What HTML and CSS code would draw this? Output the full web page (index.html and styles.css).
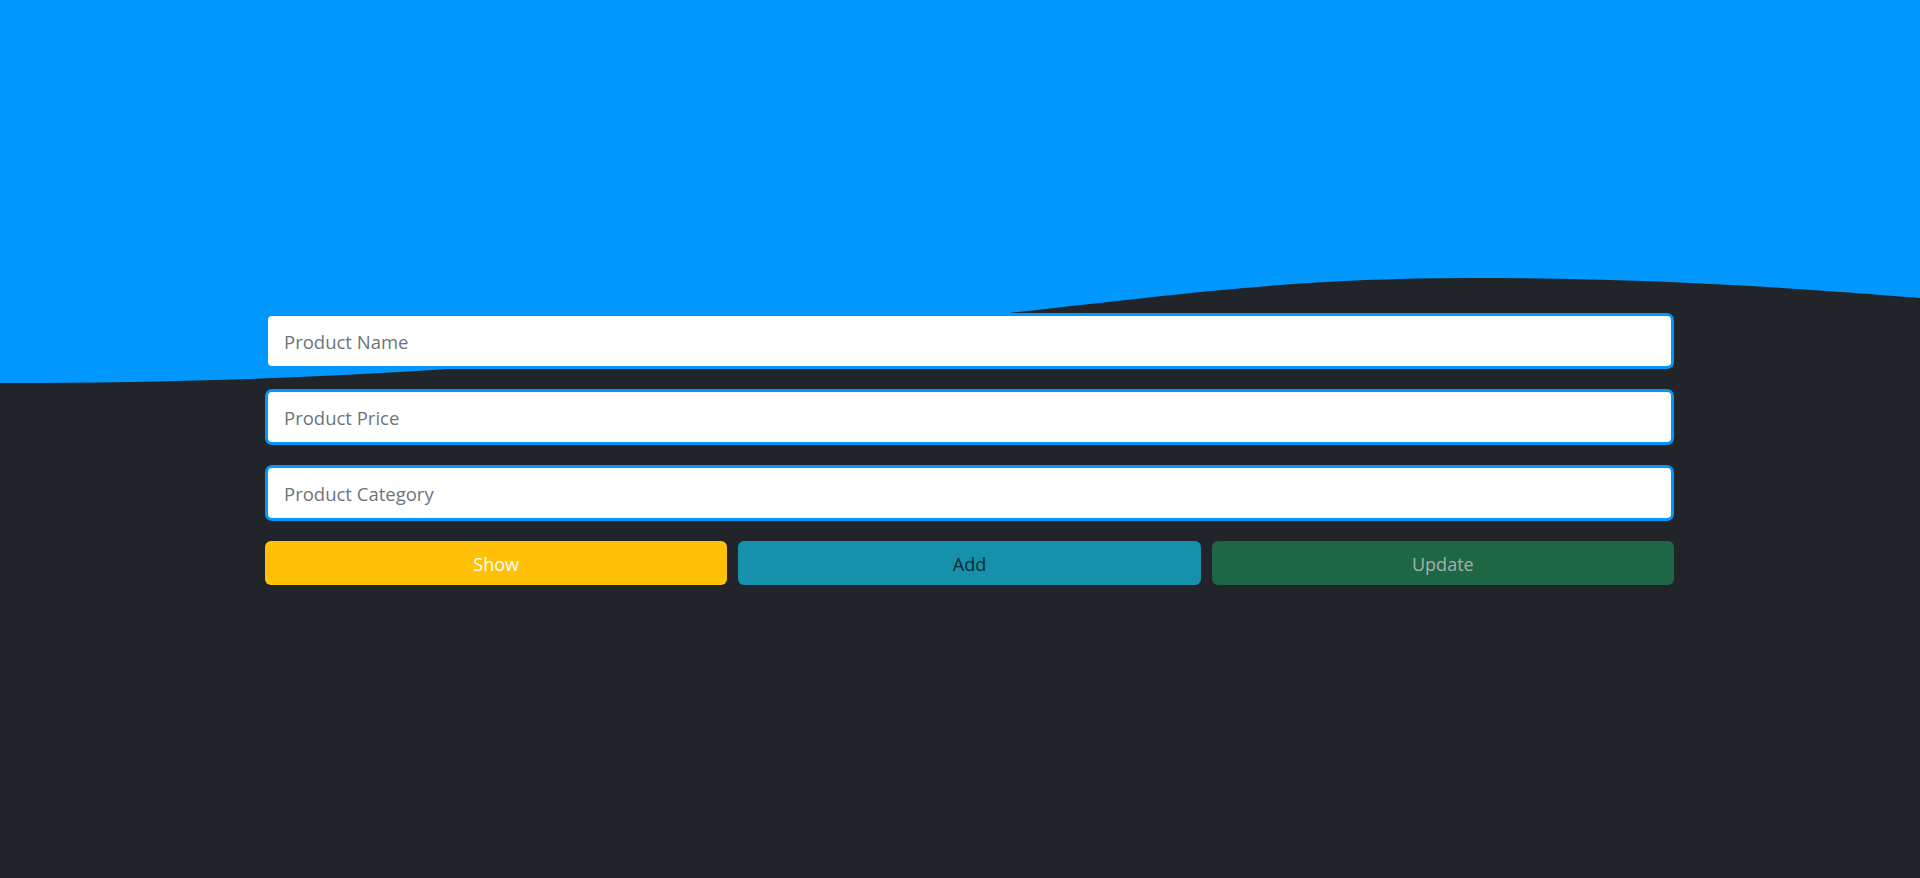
FILE: index.html
```html
<!DOCTYPE html>
<html lang="en">
<head>
<meta charset="utf-8">
<title>Products</title>
<link rel="stylesheet" href="styles.css">
</head>
<body>
<svg class="wave" viewBox="0 0 1920 400" preserveAspectRatio="none" aria-hidden="true">
  <path fill="#0098ff" d="M0,0 L1920,0 L1920,298 C1800,288 1650,278 1468,278 C1300,278 1180,294 1018,312 C650,355 400,383 0,383 Z"/>
</svg>
<main class="page">
  <form class="product-form">
    <input class="field" type="text" placeholder="Product Name">
    <input class="field" type="text" placeholder="Product Price">
    <input class="field" type="text" placeholder="Product Category">
    <div class="actions">
      <button type="button" class="btn btn-show">Show</button>
      <button type="button" class="btn btn-add">Add</button>
      <button type="button" class="btn btn-update">Update</button>
    </div>
  </form>
</main>
</body>
</html>
```
FILE: styles.css
```css
html, body {
  margin: 0;
  padding: 0;
}
body {
  background: #212529;
  min-height: 878px;
  font-family: "Open Sans", "Noto Sans", sans-serif;
  position: relative;
  overflow: hidden;
}
.wave {
  position: absolute;
  top: 0;
  left: 0;
  width: 100%;
  height: 400px;
  z-index: 0;
  display: block;
}
.page {
  position: relative;
  z-index: 1;
  padding: 313px 246px 0 265px;
}
.product-form {
  display: flex;
  flex-direction: column;
  gap: 20px;
  width: 1409px;
}
.field {
  box-sizing: border-box;
  height: 56px;
  width: 100%;
  border: 3px solid #0098ff;
  border-radius: 7px;
  background: #fff;
  padding: 0 16px;
  font-family: "Open Sans", "Noto Sans", sans-serif;
  font-size: 18.5px;
  color: #212529;
  outline: none;
}
.field::placeholder {
  color: #6c757d;
  opacity: 1;
}
.actions {
  display: grid;
  grid-template-columns: 1fr 1fr 1fr;
  gap: 11px;
}
.btn {
  box-sizing: border-box;
  height: 44px;
  padding: 2px 0 0;
  border: 0;
  border-radius: 6px;
  font-family: "Open Sans", "Noto Sans", sans-serif;
  font-size: 18px;
  cursor: pointer;
}
.btn-show {
  background: #ffc107;
  color: #ffffff;
}
.btn-add {
  background: #1591ab;
  color: #0e2a33;
}
.btn-update {
  background: #1d6646;
  color: #a8b0ac;
}
```
